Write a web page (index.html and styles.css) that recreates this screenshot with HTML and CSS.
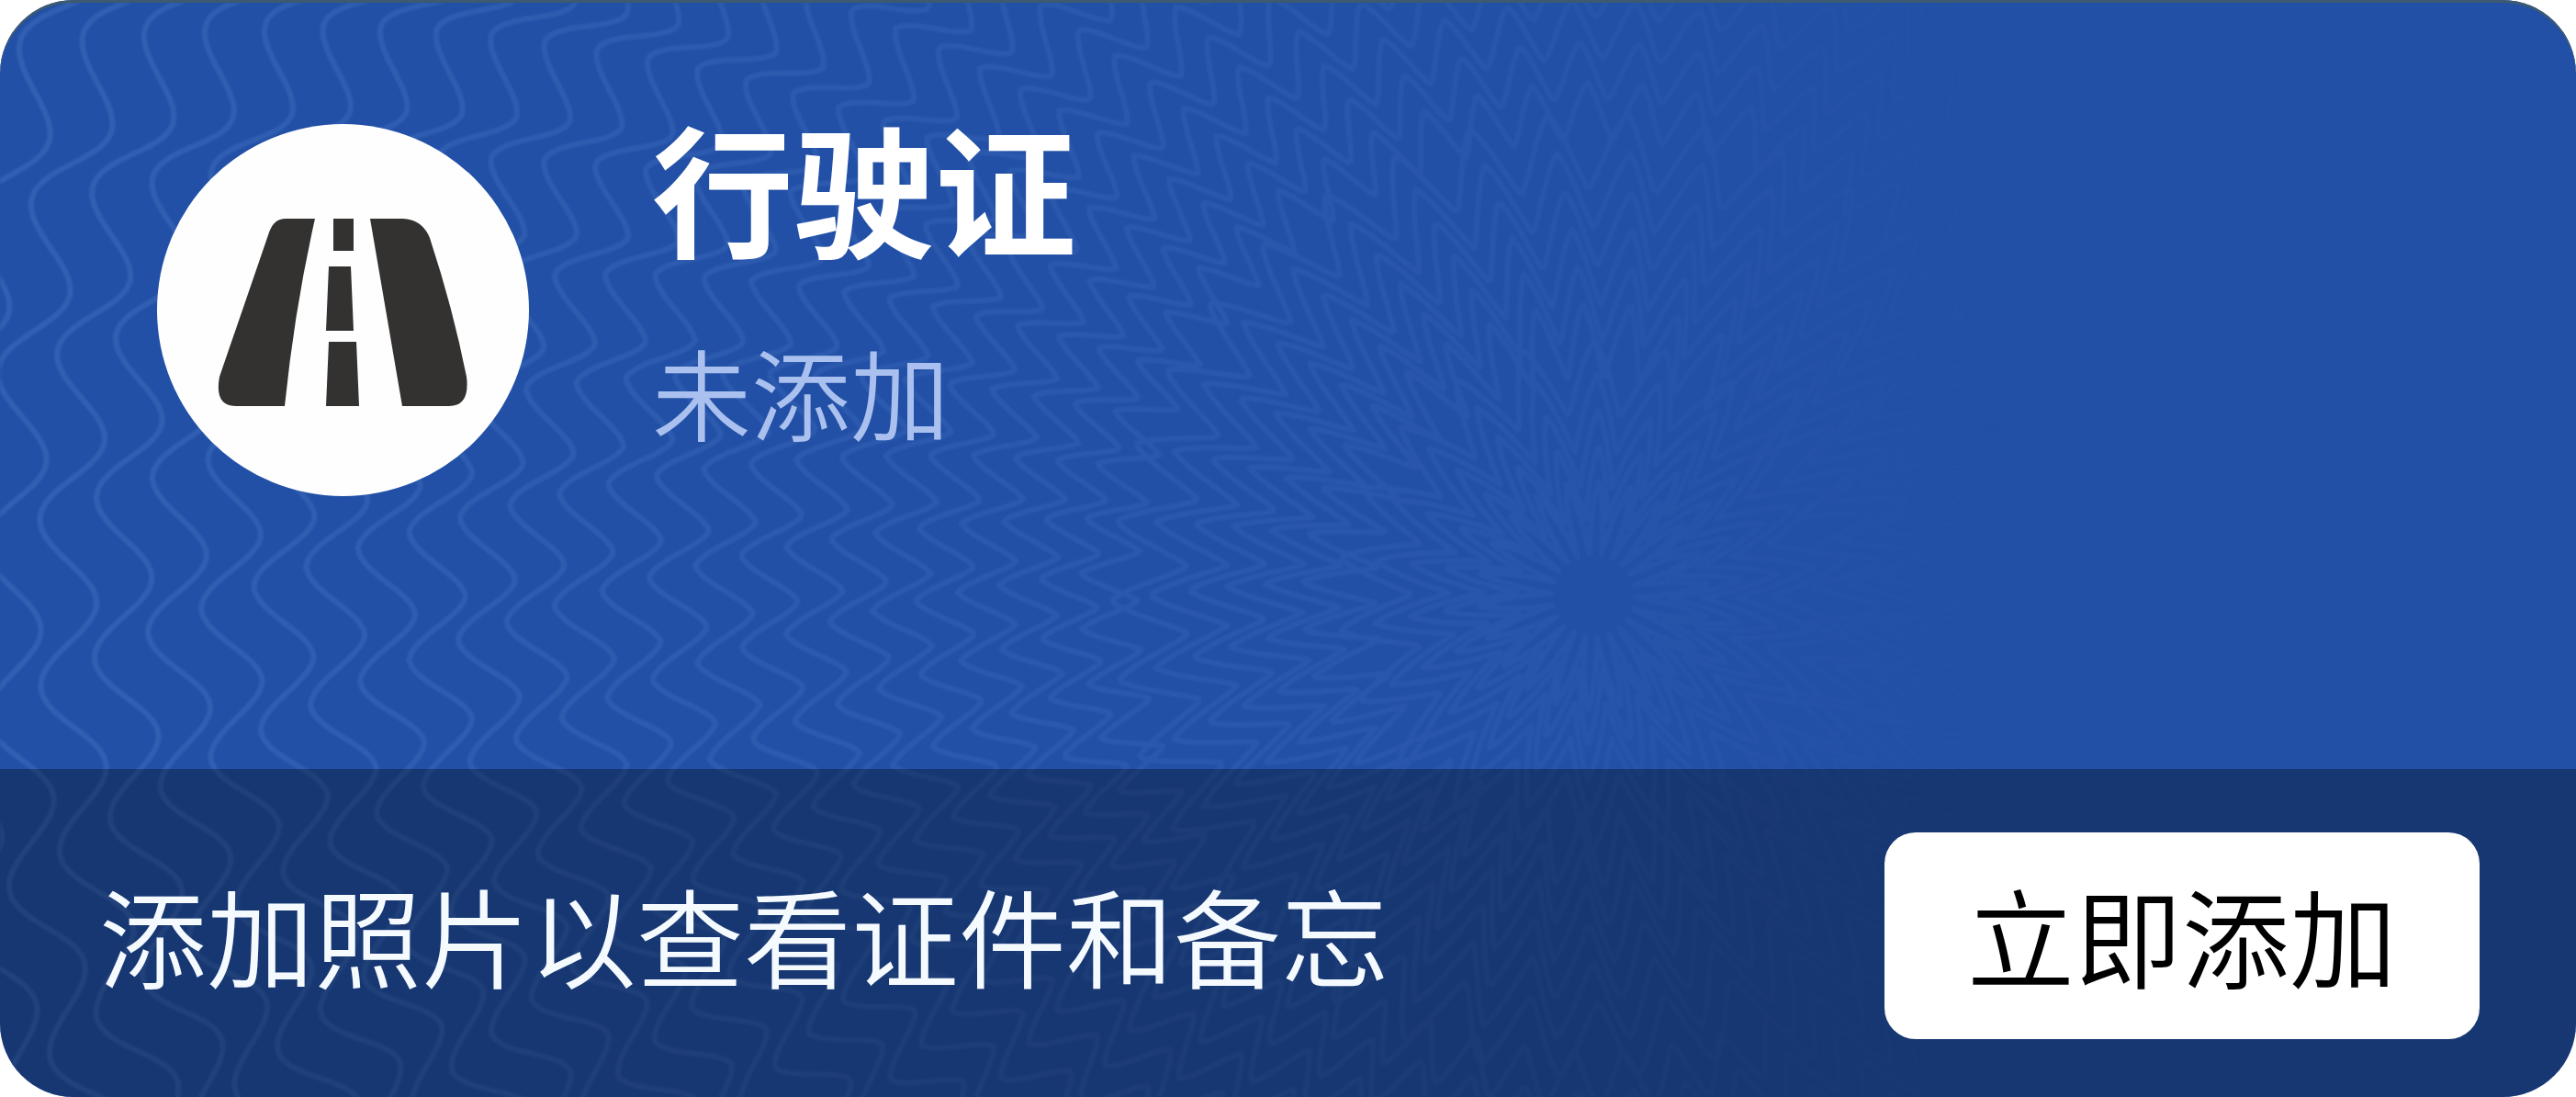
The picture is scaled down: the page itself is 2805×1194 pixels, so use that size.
FILE: index.html
```html
<!DOCTYPE html>
<html lang="zh-CN">
<head>
<meta charset="utf-8">
<meta name="viewport" content="width=device-width, initial-scale=1">
<title>行驶证</title>
<link rel="stylesheet" href="styles.css">
</head>
<body>
<main class="card">
  <svg class="card-pattern" viewBox="0 0 2805 1194" preserveAspectRatio="xMinYMin slice" aria-hidden="true">
    <path id="guilloche" />
  </svg>
  <header class="card-head">
    <div class="badge">
      <svg class="badge-icon" viewBox="0 0 405 405" aria-hidden="true">
        <path d="M172 103H140Q127 103 122 118L68 275Q62 307 86 307H139Q150 200 172 103Z"/>
        <path d="M232 103H268Q289 104 297 124Q322 200 337 275Q341 307 318 307H267Z"/>
        <path d="M192 103H214V138H192ZM187 155H211L214 225H184ZM187 237H217L220 307H184Z"/>
      </svg>
    </div>
    <div class="card-text">
      <h1 class="card-title">行驶证</h1>
      <p class="card-status">未添加</p>
    </div>
  </header>
  <footer class="card-foot">
    <p class="card-hint">添加照片以查看证件和备忘</p>
    <button class="add-button" type="button">立即添加</button>
  </footer>
</main>
<script src="pattern.js"></script>
</body>
</html>
```
FILE: styles.css
```css
* {
  box-sizing: border-box;
}

body {
  margin: 0;
  background: #fff;
  font-family: "Noto Sans CJK SC", sans-serif;
}

.card {
  position: relative;
  display: flex;
  flex-direction: column;
  min-height: 100vh;
  overflow: hidden;
  border-radius: 80px;
  background: #2250a6;
  box-shadow: inset 0 3px #3c5a70;
}

.card-pattern {
  position: absolute;
  inset: 3px 0 0;
  width: 100%;
  height: 100%;
  fill: none;
  stroke: #5b8bd6;
  stroke-width: 6;
  stroke-linejoin: round;
  filter: blur(1px);
  mask-image: linear-gradient(90deg, rgb(0 0 0 / 28%), rgb(0 0 0 / 17%) 35%, rgb(0 0 0 / 11%) 58%, transparent 78%);
}

.card-head {
  position: relative;
  flex: 1;
  display: flex;
  align-items: flex-start;
  gap: 134px;
  padding: 135px 171px 240px;
}

.badge {
  flex: none;
  width: 405px;
  height: 405px;
  border-radius: 50%;
  background: #fefefe;
}

.badge-icon {
  display: block;
  fill: #333230;
}

.card-title,
.card-status,
.card-hint {
  margin: 0;
}

.card-title {
  color: #fff;
  font-size: 154px;
  font-weight: 700;
  line-height: 134px;
}

.card-status {
  margin-top: 102px;
  color: #aac0ee;
  font-size: 108px;
  font-weight: 350;
  line-height: 108px;
}

.card-foot {
  position: relative;
  display: flex;
  align-items: center;
  justify-content: space-between;
  padding: 69px 105px 63px 108px;
  background: rgb(0 0 0 / 31%);
}

.card-hint {
  padding-bottom: 6px;
  color: #f5faff;
  font-size: 117px;
  font-weight: 350;
  line-height: 120px;
}

.add-button {
  height: 225px;
  padding: 0 90px 6px;
  border: 0;
  border-radius: 34px;
  background: #fefffe;
  color: #000;
  font-family: inherit;
  font-size: 117px;
  font-weight: 350;
  line-height: 120px;
}
```
FILE: pattern.js
```js
// Guilloche backdrop: concentric rings with a wave whose phase twists with the radius.
const centre = { x: 1735, y: 645 };
const twist = 0.00028;
let d = "";

for (let ring = 85; ring < 2000; ring += 36 + ring * 0.015) {
  const inner = ring < 520;
  const waves = inner ? (ring < 260 ? 22 : 38) : 58;
  const amplitude = inner ? 42 : 32;
  const steps = waves * 20;
  for (let i = 0; i <= steps; i++) {
    const angle = (i / steps) * Math.PI * 2;
    const wave = Math.sin(waves * (angle - twist * ring));
    // Rings near the centre fold into zigzags, outer rings stay rounded.
    const fold = (Math.asin(wave) * 2) / Math.PI;
    const mix = Math.min(1, ring / 1600);
    const r = ring + amplitude * (wave * mix + fold * (1 - mix));
    const x = centre.x - r * Math.cos(angle);
    const y = centre.y + r * Math.sin(angle);
    d += (i ? "L" : "M") + x.toFixed(1) + " " + y.toFixed(1);
  }
}

document.getElementById("guilloche").setAttribute("d", d);
```
